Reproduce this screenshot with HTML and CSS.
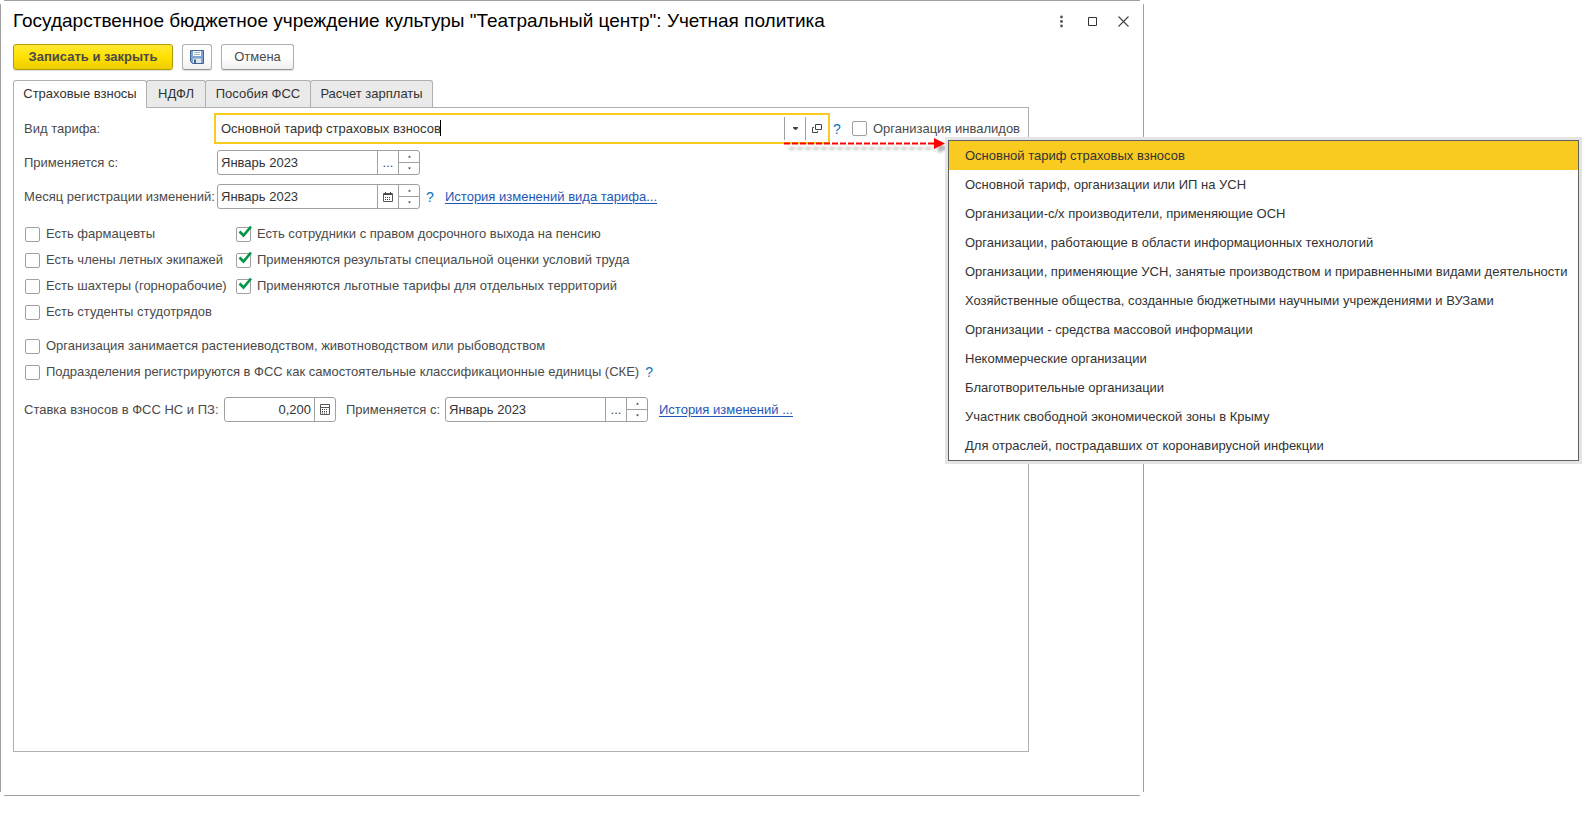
FILE: index.html
```html
<!DOCTYPE html>
<html lang="ru">
<head>
<meta charset="utf-8">
<title>Учетная политика</title>
<link rel="stylesheet" href="styles.css">
</head>
<body>
<main class="window">
  <header class="titlebar">
    <h1 class="title">Государственное бюджетное учреждение культуры "Театральный центр": Учетная политика</h1>
    <div class="window-actions">
      <button class="icon-button" type="button" aria-label="Еще"><svg width="15" height="15" viewBox="0 0 15 15"><g fill="#555"><circle cx="7.500" cy="3" r="1.400"/><circle cx="7.500" cy="7.500" r="1.400"/><circle cx="7.500" cy="12" r="1.400"/></g></svg></button>
      <button class="icon-button" type="button" aria-label="Развернуть"><svg width="15" height="15" viewBox="0 0 15 15"><path d="M3.500 3.500h8v8h-8z" fill="none" stroke="#333"/></svg></button>
      <button class="icon-button" type="button" aria-label="Закрыть"><svg width="15" height="15" viewBox="0 0 15 15"><path d="M2.500 2.500l10 10M12.500 2.500l-10 10" fill="none" stroke="#444" stroke-width="1.100"/></svg></button>
    </div>
  </header>

  <div class="toolbar">
    <button class="button primary" type="button">Записать и закрыть</button>
    <button class="button save" type="button" aria-label="Записать"><svg width="14" height="14" viewBox="0 0 14 14"><path d="M.5.5h13v13H2.500l-2-2z" fill="#7ba4d3" stroke="#42658f"/><path d="M3 1h8v5H3z" fill="#fff"/><path d="M4 2.500h6M4 4.500h6" stroke="#9eb3ca"/><path d="M3 8.500h8V13H3z" fill="#dfe6ed"/><path d="M4 9.500h2V13H4z" fill="#42658f"/></svg></button>
    <button class="button cancel" type="button">Отмена</button>
  </div>

  <div class="tabs" role="tablist">
    <button class="tab active" type="button" role="tab" aria-selected="true">Страховые взносы</button>
    <button class="tab tax" type="button" role="tab">НДФЛ</button>
    <button class="tab benefits" type="button" role="tab">Пособия ФСС</button>
    <button class="tab payroll" type="button" role="tab">Расчет зарплаты</button>
  </div>

  <section class="panel">
    <div class="row tariff-row">
      <label class="tariff-label" for="tariff">Вид тарифа:</label>
      <div class="combo">
        <input id="tariff" type="text" value="Основной тариф страховых взносов">
        <span class="caret"></span>
        <button class="part" type="button" aria-label="Выбрать"><svg width="7" height="5" viewBox="0 0 7 5"><path d="M1 1h5v1L4 4H3L1 2z" fill="#444"/></svg></button>
        <button class="part open" type="button" aria-label="Открыть"><svg width="10" height="10" viewBox="0 0 10 10"><path d="M3.500.5h6v5h-6zM2 3.500H.5v5h5V7" fill="none" stroke="#444"/></svg></button>
      </div>
      <button class="help" type="button">?</button>
      <label class="check invalids"><span class="box"><input type="checkbox"></span>Организация инвалидов</label>
    </div>

    <div class="row">
      <label class="field-label" for="from">Применяется с:</label>
      <div class="field">
        <input id="from" type="text" value="Январь 2023">
        <button class="part" type="button" aria-label="Выбрать">...</button>
        <div class="spinner"><button type="button" aria-label="Больше"><svg width="5" height="3" viewBox="0 0 5 3"><path d="M1 2.500h3L2.500.5z" fill="#444"/></svg></button><button type="button" aria-label="Меньше"><svg width="5" height="3" viewBox="0 0 5 3"><path d="M1 .5h3l-1.500 2z" fill="#444"/></svg></button></div>
      </div>
    </div>

    <div class="row">
      <label class="field-label" for="month">Месяц регистрации изменений:</label>
      <div class="field">
        <input id="month" type="text" value="Январь 2023">
        <button class="part" type="button" aria-label="Календарь"><svg width="10" height="10" viewBox="0 0 10 10"><path d="M.5 1.500h9v8h-9z" fill="none" stroke="#555"/><path d="M1 2h8v1H1zM2 0h1v2H2zM7 0h1v2H7z" fill="#444"/><path d="M2 5.500h6M2 7.500h6" stroke="#444" stroke-dasharray="1 1"/></svg></button>
        <div class="spinner"><button type="button" aria-label="Больше"><svg width="5" height="3" viewBox="0 0 5 3"><path d="M1 2.500h3L2.500.5z" fill="#444"/></svg></button><button type="button" aria-label="Меньше"><svg width="5" height="3" viewBox="0 0 5 3"><path d="M1 .5h3l-1.500 2z" fill="#444"/></svg></button></div>
      </div>
      <button class="help" type="button">?</button>
      <a class="link" href="#">История изменений вида тарифа...</a>
    </div>

    <div class="checks">
      <div class="check-list">
        <label class="check"><span class="box"><input type="checkbox"></span>Есть фармацевты</label>
        <label class="check"><span class="box"><input type="checkbox"></span>Есть члены летных экипажей</label>
        <label class="check"><span class="box"><input type="checkbox"></span>Есть шахтеры (горнорабочие)</label>
        <label class="check"><span class="box"><input type="checkbox"></span>Есть студенты студотрядов</label>
      </div>
      <div class="check-list">
        <label class="check"><span class="box"><input type="checkbox" checked><svg class="tick" width="14" height="13" viewBox="0 0 14 13"><path d="M1.500 6.500l4 4 7.500-9" fill="none" stroke="#009646" stroke-width="2.600"/></svg></span>Есть сотрудники с правом досрочного выхода на пенсию</label>
        <label class="check"><span class="box"><input type="checkbox" checked><svg class="tick" width="14" height="13" viewBox="0 0 14 13"><path d="M1.500 6.500l4 4 7.500-9" fill="none" stroke="#009646" stroke-width="2.600"/></svg></span>Применяются результаты специальной оценки условий труда</label>
        <label class="check"><span class="box"><input type="checkbox" checked><svg class="tick" width="14" height="13" viewBox="0 0 14 13"><path d="M1.500 6.500l4 4 7.500-9" fill="none" stroke="#009646" stroke-width="2.600"/></svg></span>Применяются льготные тарифы для отдельных территорий</label>
      </div>
    </div>

    <div class="check-list">
      <label class="check"><span class="box"><input type="checkbox"></span>Организация занимается растениеводством, животноводством или рыбоводством</label>
      <div class="check-line">
        <label class="check"><span class="box"><input type="checkbox"></span>Подразделения регистрируются в ФСС как самостоятельные классификационные единицы (СКЕ)</label>
        <button class="help" type="button">?</button>
      </div>
    </div>

    <div class="row rate-row">
      <label class="rate-label" for="rate">Ставка взносов в ФСС НС и ПЗ:</label>
      <div class="field rate">
        <input id="rate" type="text" value="0,200">
        <button class="part" type="button" aria-label="Калькулятор"><svg width="10" height="11" viewBox="0 0 10 11"><path d="M.5.5h9v10h-9zM1 3.500h8" fill="none" stroke="#555"/><path d="M2 5.500h6M2 7.500h6M2 9h6" stroke="#444" stroke-dasharray="1 1"/></svg></button>
      </div>
      <label class="from-label" for="rate-from">Применяется с:</label>
      <div class="field">
        <input id="rate-from" type="text" value="Январь 2023">
        <button class="part" type="button" aria-label="Выбрать">...</button>
        <div class="spinner"><button type="button" aria-label="Больше"><svg width="5" height="3" viewBox="0 0 5 3"><path d="M1 2.500h3L2.500.5z" fill="#444"/></svg></button><button type="button" aria-label="Меньше"><svg width="5" height="3" viewBox="0 0 5 3"><path d="M1 .5h3l-1.500 2z" fill="#444"/></svg></button></div>
      </div>
      <a class="link rate-link" href="#">История изменений ...</a>
    </div>
  </section>

  <svg class="arrow" width="166" height="24" viewBox="0 0 166 24">
    <defs><filter id="soft" x="-10%" y="-100%" width="120%" height="300%"><feGaussianBlur stdDeviation="1.500"/></filter></defs>
    <g filter="url(#soft)" opacity=".3"><path d="M5 14.500h146" stroke="#000" stroke-width="2" stroke-dasharray="6 2"/><path d="M154 9l11 5-11 5z"/></g>
    <path d="M0 9.500h150" stroke="#f00" stroke-width="2" stroke-dasharray="6 2"/><path d="M150 4l11 5.500-11 5.500z" fill="#f00"/>
  </svg>

  <ul class="menu" role="listbox">
    <li class="option selected" role="option" aria-selected="true">Основной тариф страховых взносов</li>
    <li class="option" role="option">Основной тариф, организации или ИП на УСН</li>
    <li class="option" role="option">Организации-с/х производители, применяющие ОСН</li>
    <li class="option" role="option">Организации, работающие в области информационных технологий</li>
    <li class="option" role="option">Организации, применяющие УСН, занятые производством и приравненными видами деятельности</li>
    <li class="option" role="option">Хозяйственные общества, созданные бюджетными научными учреждениями и ВУЗами</li>
    <li class="option" role="option">Организации - средства массовой информации</li>
    <li class="option" role="option">Некоммерческие организации</li>
    <li class="option" role="option">Благотворительные организации</li>
    <li class="option" role="option">Участник свободной экономической зоны в Крыму</li>
    <li class="option" role="option">Для отраслей, пострадавших от коронавирусной инфекции</li>
  </ul>
</main>
</body>
</html>
```
FILE: styles.css
```css
* { box-sizing: border-box; }

body {
  margin: 0;
  background: #fff;
  color: #4a4a4a;
  font: 13px/16px "Liberation Sans", Arial, sans-serif;
}

button, input { font: inherit; color: inherit; margin: 0; }
button { padding: 0; border: 0; background: none; }

.window {
  position: relative;
  width: calc(100% - 447px);
  padding: 8px 13px 44px;
  background:
    linear-gradient(#a0a0a0, #a0a0a0) center top / calc(100% - 8px) 1px no-repeat,
    linear-gradient(#a0a0a0, #a0a0a0) center bottom / calc(100% - 8px) 1px no-repeat,
    linear-gradient(#a0a0a0, #a0a0a0) left center / 1px calc(100% - 8px) no-repeat,
    linear-gradient(#a0a0a0, #a0a0a0) right center / 1px calc(100% - 8px) no-repeat;
}

.titlebar { display: flex; justify-content: space-between; align-items: center; height: 26px; }
.title { margin: 0; color: #000; font-size: 19px; line-height: 26px; font-weight: normal; white-space: nowrap; }
.window-actions { display: flex; gap: 16px; }
.icon-button { display: flex; width: 15px; height: 15px; }

.toolbar { display: flex; gap: 9px; margin-top: 10px; }
.button {
  display: flex;
  align-items: center;
  justify-content: center;
  height: 26px;
  border: 1px solid #b0b0b0;
  border-bottom-color: #969696;
  border-radius: 3px;
  background: linear-gradient(#fff 50%, #f0f0f0);
  box-shadow: 0 1px 1px #ddd;
}
.primary {
  width: 160px;
  border-color: #b39b00;
  background: linear-gradient(#ffe934, #ffe100 50%, #edcd00);
  font-weight: bold;
}
.save { width: 30px; }
.cancel { width: 73px; }

.tabs { display: flex; margin-top: 10px; }
.tab {
  height: 27px;
  margin-right: -1px;
  border: 1px solid #b0b0b0;
  border-bottom: 0;
  border-radius: 3px 3px 0 0;
  background: #eaeaea;
  color: #333;
  white-space: nowrap;
}
.tab.active { position: relative; width: 134px; height: 28px; margin-bottom: -1px; padding-bottom: 1px; background: #fff; }
.tax { width: 60px; }
.benefits { width: 106px; }
.payroll { width: 123px; }

.panel {
  display: flex;
  flex-direction: column;
  min-height: 645px;
  margin-right: 102px;
  padding: 5px 10px;
  border: 1px solid #b0b0b0;
}

.row { display: flex; align-items: center; height: 25px; margin-bottom: 9px; white-space: nowrap; }
.tariff-row { height: 31px; margin-bottom: 6px; }
.tariff-label { width: 190px; }
.field-label { width: 193px; }

.combo {
  position: relative;
  display: flex;
  flex: 1;
  height: 31px;
  padding: 2px 1px;
  border: 2px solid #f9cb20;
}
.combo input { flex: 1; min-width: 0; padding: 0 4px; border: 0; color: #333; outline: 0; background: none; }
.caret { position: absolute; left: 224px; top: 5px; width: 1px; height: 16px; background: #000; }
.part {
  display: flex;
  align-items: center;
  justify-content: center;
  width: 21px;
  border-left: 1px solid #a0a0a0;
}
.part.open { width: 22px; }

.field {
  display: flex;
  width: 203px;
  height: 25px;
  border: 1px solid #a0a0a0;
  border-radius: 3px;
}
.field input { flex: 1; min-width: 0; padding: 0 3px; border: 0; color: #333; outline: 0; background: none; }
.spinner { display: flex; flex-direction: column; width: 21px; border-left: 1px solid #a0a0a0; }
.spinner button { display: flex; flex: 1; align-items: center; justify-content: center; }
.spinner button + button { border-top: 1px solid #a0a0a0; }

.help { width: 8px; margin-left: 6px; color: #0b74bb; font-size: 14px; }
.tariff-row .help { margin-left: 3px; }
.link { margin-left: 11px; color: #1d57b7; text-underline-offset: 2px; }

.checks { display: grid; grid-template-columns: 211px 1fr; margin: 3px 0 8px; }
.check-list { display: flex; flex-direction: column; align-items: flex-start; padding: 0 1px; }
.check { display: flex; align-items: center; gap: 6px; height: 26px; white-space: nowrap; }
.invalids { width: 166px; margin-left: 11px; }
.box { position: relative; display: flex; flex: none; width: 15px; height: 15px; }
.box input {
  appearance: none;
  width: 15px;
  height: 15px;
  border: 1px solid #a0a0a0;
  border-radius: 2px;
  background: #fff;
}
.tick { position: absolute; left: 2px; top: -2px; }
.check-line { display: flex; align-items: center; }

.rate-row { margin-top: 12px; }
.rate-label { width: 200px; }
.rate { width: 112px; }
.rate input { text-align: right; }
.from-label { width: 99px; margin-left: 10px; }

.arrow { position: absolute; top: 134px; right: 194px; }

.menu {
  position: absolute;
  left: calc(100% - 196px);
  top: 140px;
  width: 631px;
  margin: 0;
  padding: 0;
  border: 1px solid #606060;
  outline: 3px solid #e4e4e4;
  background: #fff;
  color: #333;
  list-style: none;
}
.option { padding: 0 16px; line-height: 29px; white-space: nowrap; }
.option.selected { background: #f9cb20; }
```
